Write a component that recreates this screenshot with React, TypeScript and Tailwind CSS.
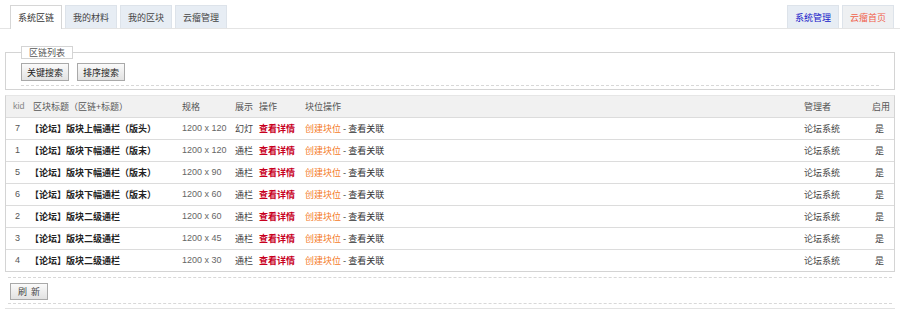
import React from "react";

type Row = {
  kid: number;
  title: string;
  size: string;
  show: string;
};

const rows: Row[] = [
  { kid: 7, title: "【论坛】版块上幅通栏（版头）", size: "1200 x 120", show: "幻灯" },
  { kid: 1, title: "【论坛】版块下幅通栏（版末）", size: "1200 x 120", show: "通栏" },
  { kid: 5, title: "【论坛】版块下幅通栏（版末）", size: "1200 x 90", show: "通栏" },
  { kid: 6, title: "【论坛】版块下幅通栏（版末）", size: "1200 x 60", show: "通栏" },
  { kid: 2, title: "【论坛】版块二级通栏", size: "1200 x 60", show: "通栏" },
  { kid: 3, title: "【论坛】版块二级通栏", size: "1200 x 45", show: "通栏" },
  { kid: 4, title: "【论坛】版块二级通栏", size: "1200 x 30", show: "通栏" },
];

const leftTabs = ["系统区链", "我的材料", "我的区块", "云瘤管理"];

const btn =
  "h-[18px] px-[5px] border border-[#a9a9a9] bg-gradient-to-b from-[#fafafa] to-[#e2e2e2] text-[#222] leading-none";

export default function App() {
  return (
    <div className="w-[900px] h-[311px] bg-white text-[9px] leading-none text-[#333] font-['Noto_Sans_CJK_SC','Liberation_Sans',sans-serif] overflow-hidden">
      {/* tabs */}
      <div className="flex items-end justify-between h-[29px] border-b border-[#e4e4e4] pl-[10px] pr-[6px]">
        <div className="flex items-end gap-[3px]">
          {leftTabs.map((t, i) => (
            <div
              key={t}
              className={
                i === 0
                  ? "h-[24px] px-[7px] flex items-center bg-white border border-b-0 border-[#d6d6d6] -mb-px relative"
                  : "h-[23px] px-[7px] flex items-center bg-[#e7edf4] border border-b-0 border-[#dde3ea] text-[#444]"
              }
            >
              {t}
            </div>
          ))}
        </div>
        <div className="flex items-end gap-[3px]">
          <div className="h-[23px] px-[7px] flex items-center bg-[#e7edf4] border border-b-0 border-[#dde3ea] text-[#1515c8]">
            系统管理
          </div>
          <div className="h-[23px] px-[7px] flex items-center bg-[#eef0f2] border border-b-0 border-[#dde3ea] text-[#f0604a]">
            云瘤首页
          </div>
        </div>
      </div>

      {/* fieldset */}
      <fieldset className="mx-[5px] mt-[17px] border border-[#d4d4d4] px-[15px] pb-[3px]">
        <legend className="px-[7px] h-[13px] flex items-center border border-[#d4d4d4] bg-white text-[#555]">
          区链列表
        </legend>
        <div className="flex gap-[8px] mt-[4px]">
          <button className={btn}>关键搜索</button>
          <button className={btn}>排序搜索</button>
        </div>
        <div className="mt-[4px] border-t border-dashed border-[#d8d8d8]" />
      </fieldset>

      {/* table */}
      <div className="mx-[5px] mt-[5px] border border-[#d4d4d4] border-t-[#e6e6e6]">
        <table className="w-full table-fixed border-collapse">
          <colgroup>
            <col className="w-[23px]" />
            <col className="w-[149px]" />
            <col className="w-[53px]" />
            <col className="w-[24px]" />
            <col className="w-[46px]" />
            <col />
            <col className="w-[68px]" />
            <col className="w-[26px]" />
          </colgroup>
          <thead>
            <tr className="h-[21px] bg-[#f1f1f1] text-[#555]">
              <th className="pl-[7px] text-left font-normal text-[#888] font-['Liberation_Sans',sans-serif]">kid</th>
              <th className="pl-[4px] text-left font-normal whitespace-nowrap">区块标题（区链+标题）</th>
              <th className="pl-[4px] text-left font-normal">规格</th>
              <th className="pl-[4px] text-left font-normal whitespace-nowrap">展示</th>
              <th className="pl-[4px] text-left font-normal">操作</th>
              <th className="pl-[4px] text-left font-normal">块位操作</th>
              <th className="pl-[4px] text-left font-normal">管理者</th>
              <th className="pl-[4px] text-left font-normal whitespace-nowrap">启用</th>
            </tr>
          </thead>
          <tbody>
            {rows.map((r) => (
              <tr key={r.kid} className="h-[22px] border-t border-[#dcdcdc]">
                <td className="pl-[9px] text-[#555] font-['Liberation_Sans',sans-serif]">{r.kid}</td>
                <td className="pl-[1px] font-bold text-[#222] whitespace-nowrap">{r.title}</td>
                <td className="pl-[4px] text-[#666] whitespace-nowrap font-['Liberation_Sans',sans-serif]">{r.size}</td>
                <td className="pl-[4px] text-[#444] whitespace-nowrap">{r.show}</td>
                <td className="pl-[4px] font-bold text-[#c8001e] whitespace-nowrap">查看详情</td>
                <td className="pl-[4px] whitespace-nowrap">
                  <span className="text-[#f47a1f]">创建块位</span>
                  <span className="text-[#333]"> - 查看关联</span>
                </td>
                <td className="pl-[4px] text-[#444]">论坛系统</td>
                <td className="pl-[7px] text-[#444]">是</td>
              </tr>
            ))}
          </tbody>
        </table>
      </div>

      {/* footer */}
      <div className="mx-[8px] mt-[5px] border-t border-dashed border-[#d8d8d8] pt-[5px] pb-[3px] pl-[2px]">
        <button className="h-[17px] w-[38px] border border-[#a9a9a9] bg-gradient-to-b from-[#fafafa] to-[#e2e2e2] text-[#444] leading-none tracking-[4px] pl-[4px]">
          刷新
        </button>
      </div>
      <div className="mx-[8px] border-t border-dashed border-[#d8d8d8]" />
      <div className="mx-[5px] mt-[4px] border-t border-[#e2e2e2]" />
    </div>
  );
}
